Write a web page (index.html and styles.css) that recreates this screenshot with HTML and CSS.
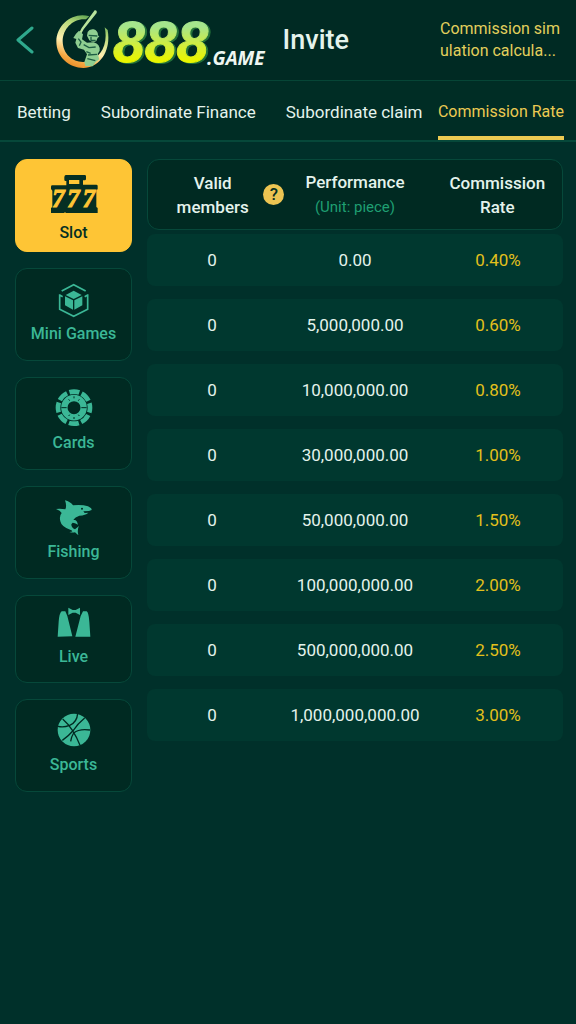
FILE: index.html
```html
<!DOCTYPE html>
<html lang="en">
<head>
  <meta charset="UTF-8">
  <meta name="viewport" content="width=device-width, initial-scale=1.0">
  <title>Invite</title>
  <link rel="stylesheet" href="styles.css">
</head>
<body>
  <header class="header">
    <button class="back" aria-label="Back">
      <svg width="18" height="28" viewBox="0 0 18 28"><path d="M16 2 L2 14 L16 26" /></svg>
    </button>
    <a class="logo" href="#">
      <svg class="emblem" width="56" height="60" viewBox="15 18 168 180" aria-hidden="true">
        <defs>
          <linearGradient id="ring" x1="0.7" y1="0" x2="0.3" y2="1">
            <stop offset="0" stop-color="#4f9a4c" />
            <stop offset="0.25" stop-color="#b5d978" />
            <stop offset="0.6" stop-color="#fff0b0" />
            <stop offset="0.85" stop-color="#f5a742" />
            <stop offset="1" stop-color="#e88a24" />
          </linearGradient>
        </defs>
        <path fill="url(#ring)" d="M118 37 C72 22 20 60 19 112 C19 160 58 192 100 192 C150 190 184 140 173 78 L164 70 C176 122 150 166 108 173 C72 178 39 154 38 112 C38 74 70 42 108 46 Z" />
        <path fill="#b9e39c" d="M134 19 Q142 18 140 27 L101 76 L92 92 L87 88 L95 72 Z" />
        <path fill="#8fce91" d="M113 84 Q118 74 131 76 Q144 80 144 94 L148 98 L143 101 L139 111 Q129 117 118 109 L111 95 Z" />
        <path fill="#8fce91" d="M78 89 L87 80 L99 91 L96 106 L111 116 L131 115 Q151 121 149 140 L143 150 L148 166 L137 174 L128 187 L106 186 L103 174 L111 151 L102 137 L84 132 L76 116 L79 105 L70 102 Z" />
        <path class="emblem-line" d="M116 94 L142 96 M123 98 L123 109 L137 109 M85 104 L93 114 L88 125 M101 122 L117 131 L137 129 M114 153 L141 151 M109 143 L122 148 M112 164 L136 170" />
      </svg>
      <span class="logo-digits">888</span>
      <span class="logo-game">.GAME</span>
    </a>
    <h1 class="title">Invite</h1>
    <a class="calculator" href="#">Commission sim<br>ulation calcula...</a>
  </header>

  <nav class="tabs">
    <a class="tab" href="#">Betting</a>
    <a class="tab" href="#">Subordinate Finance</a>
    <a class="tab" href="#">Subordinate claim</a>
    <a class="tab active" href="#">Commission Rate</a>
  </nav>

  <main class="content">
    <nav class="games">
      <button class="game selected">
        <svg width="48" height="40" viewBox="133 72 144 120" aria-hidden="true">
          <path d="M176 78 h61 q4 0 4 4 v8 q0 4 -4 4 h-5 v13 h40 q4 0 4 4 v9 l-4 5 v49 l4 3 v14 q0 4 -4 4 h-89 l-5 -6 l-5 6 h-33 q-4 0 -4 -4 v-14 l4 -3 v-49 l-4 -5 v-7 q0 -4 4 -4 h42 v-13 h-2 q-4 0 -4 -4 v-8 q0 -4 4 -4 Z" />
          <rect class="slot-light" x="190" y="93" width="31" height="12" />
          <text class="slot-seven" x="140" y="173">7</text>
          <text class="slot-seven" x="185" y="173">7</text>
          <text class="slot-seven" x="231" y="173">7</text>
        </svg>
        <span>Slot</span>
      </button>
      <button class="game">
        <svg width="32" height="40" viewBox="157 58 96 120" aria-hidden="true">
          <path class="hex-line" d="M168 91 L204 72 L240 91 M162 101 V146 L204 167 L246 146 V101 M162 103 L171 108 M246 103 L237 108" />
          <path d="M204 90 L228 103 L204 115 L180 103 Z M178 107 L202 119 V147 L178 134 Z M230 107 L206 119 V147 L230 134 Z" />
        </svg>
        <span>Mini Games</span>
      </button>
      <button class="game">
        <svg width="40" height="40" viewBox="0 4 120 120" aria-hidden="true">
          <circle class="chip-rim" cx="60" cy="60" r="48" pathLength="80" />
          <circle class="chip-ring" cx="60" cy="60" r="29" />
          <path class="chip-marks" d="M22 60 H38 M82 60 H98 M60 26 V32 M60 88 V94 M44 35 L47 39 M76 35 L73 39 M44 85 L47 81 M76 85 L73 81" />
        </svg>
        <span>Cards</span>
      </button>
      <button class="game">
        <svg width="38" height="40" viewBox="147 53 114 120" aria-hidden="true">
          <path d="M177 60 Q193 64 201 75 Q227 72 246 78 Q258 84 257 89 L249 92 L232 93 L236 98 L247 97 Q239 105 220 106 Q207 111 202 118 Q211 118 213 124 L216 133 Q206 127 200 127 L196 132 Q196 143 207 147 L219 137 Q213 147 217 165 L207 156 Q199 158 190 155 Q204 154 196 150 Q166 140 163 123 Q159 107 167 98 Q163 91 150 86 Q163 84 178 87 Q183 77 177 60 Z" />
          <circle class="fish-eye" cx="228" cy="85" r="3" />
        </svg>
        <span>Fishing</span>
      </button>
      <button class="game short">
        <svg width="34" height="34" viewBox="153 52 102 102" aria-hidden="true">
          <path d="M187 54 L200 61 H209 L222 54 V76 L209 69 H200 L187 76 Z M167 65 H178 L184 79 L199 140 L155 141 L158 96 Q160 70 167 65 Z M231 65 H242 Q248 68 250 96 L253 141 H208 L224 79 Z" />
        </svg>
        <span>Live</span>
      </button>
      <button class="game">
        <svg width="34" height="40" viewBox="0 4 102 120" aria-hidden="true">
          <circle cx="51" cy="61" r="49" />
          <path class="ball-line" d="M17 28 Q49 56 69 107 M62 11 Q60 38 38 47 Q20 54 3 50 M83 25 Q61 43 50 61 Q34 80 16 92 M99 61 Q67 56 50 70 Q43 81 41 95" />
        </svg>
        <span>Sports</span>
      </button>
    </nav>

    <table class="rates">
      <thead>
        <tr>
          <th>Valid<br>members <button class="help" aria-label="Help">?</button></th>
          <th>Performance<br><small>(Unit: piece)</small></th>
          <th>Commission<br>Rate</th>
        </tr>
      </thead>
      <tbody>
        <tr><td>0</td><td>0.00</td><td>0.40%</td></tr>
        <tr><td>0</td><td>5,000,000.00</td><td>0.60%</td></tr>
        <tr><td>0</td><td>10,000,000.00</td><td>0.80%</td></tr>
        <tr><td>0</td><td>30,000,000.00</td><td>1.00%</td></tr>
        <tr><td>0</td><td>50,000,000.00</td><td>1.50%</td></tr>
        <tr><td>0</td><td>100,000,000.00</td><td>2.00%</td></tr>
        <tr><td>0</td><td>500,000,000.00</td><td>2.50%</td></tr>
        <tr><td>0</td><td>1,000,000,000.00</td><td>3.00%</td></tr>
      </tbody>
    </table>
  </main>
</body>
</html>
```
FILE: styles.css
```css
* {
  box-sizing: border-box;
}

body {
  margin: 0;
  min-height: 100vh;
  background-color: #00302a;
  color: #e4f3ec;
  font-family: Roboto, "Liberation Sans", sans-serif;
  font-size: 17px;
}

button {
  font: inherit;
  cursor: pointer;
}

a {
  color: inherit;
  text-decoration: none;
}

.header {
  display: flex;
  align-items: center;
  height: 80px;
  padding: 0 16px;
  background-color: #002a23;
}

.back {
  display: flex;
  padding: 0;
  border: 0;
  background: none;
}

.back path {
  fill: none;
  stroke: #2fa98d;
  stroke-width: 3;
  stroke-linecap: round;
  stroke-linejoin: round;
}

.logo {
  display: flex;
  align-items: center;
  margin-left: 21px;
}

.emblem-line {
  fill: none;
  stroke: #1d5d43;
  stroke-width: 4;
}

.logo-digits {
  padding: 4px 4px 0 2px;
  background: linear-gradient(#a5e58c 30%, #d2ee3c 58%, #e9f500 80%);
  -webkit-background-clip: text;
  background-clip: text;
  color: transparent;
  -webkit-text-stroke: 1px transparent;
  filter: drop-shadow(2px 1px 0 #24743a);
  font-family: "Liberation Sans", sans-serif;
  font-size: 57px;
  font-style: italic;
  font-weight: bold;
  line-height: 64px;
}

.logo-game {
  align-self: flex-end;
  margin-left: -5px;
  color: #eef6f1;
  font-family: "Open Sans", sans-serif;
  font-size: 19px;
  font-style: italic;
  font-weight: bold;
  line-height: 32px;
}

.title {
  margin: 0 0 0 18px;
  font-size: 27px;
  font-weight: 500;
  line-height: 32px;
}

.calculator {
  margin-left: auto;
  color: #e2cf5c;
  font-size: 16px;
  line-height: 22px;
  white-space: nowrap;
}

.tabs {
  display: flex;
  height: 62px;
  padding: 0 12px 0 17px;
  border-top: 1px solid #064536;
  border-bottom: 2px solid #06483a;
  background-color: #002d25;
  white-space: nowrap;
}

.tab {
  margin-right: 30px;
  line-height: 62px;
}

.tab.active {
  margin: 0 0 0 auto;
  border-bottom: 4px solid #ecca52;
  color: #ecca52;
  font-size: 16px;
}

.tab:nth-last-child(2) {
  margin-right: 0;
}

.content {
  display: flex;
  align-items: flex-start;
  gap: 15px;
  padding: 17px 13px 16px 15px;
}

.games {
  display: flex;
  flex-direction: column;
  gap: 16px;
  flex: 0 0 117px;
}

.game {
  display: flex;
  flex-direction: column;
  align-items: center;
  gap: 4px;
  height: 93px;
  padding: 11px 0 0;
  border: 1px solid #06483a;
  border-radius: 12px;
  background-color: #002a22;
  color: #3bb796;
  font-size: 16px;
  font-weight: 500;
  line-height: 20px;
}

.game svg {
  fill: currentColor;
}

.game.selected {
  gap: 10px;
  padding-top: 13px;
  border-color: #fec535;
  background-color: #fec535;
  color: #052f23;
}

.game.short {
  gap: 6px;
  height: 88px;
}

.slot-light {
  fill: #fec535;
}

.slot-seven {
  fill: #fec535;
  stroke: #fec535;
  stroke-width: 3;
  font-family: "Liberation Serif", serif;
  font-size: 74px;
  font-style: italic;
  font-weight: bold;
}

.hex-line {
  fill: none;
  stroke: currentColor;
  stroke-width: 5;
}

.chip-rim {
  fill: none;
  stroke: currentColor;
  stroke-width: 14;
  stroke-dasharray: 8 2;
  stroke-dashoffset: 4;
}

.chip-ring {
  fill: none;
  stroke: currentColor;
  stroke-width: 19;
}

.chip-marks,
.ball-line {
  fill: none;
  stroke: #002a22;
  stroke-width: 3;
}

.ball-line {
  stroke-width: 4;
}

.fish-eye {
  fill: #002a22;
}

.rates {
  display: block;
  flex: 1;
  text-align: center;
}

.rates thead {
  display: block;
}

.rates tbody {
  display: flex;
  flex-direction: column;
  gap: 13px;
  margin-top: 4px;
}

.rates tr {
  display: grid;
  grid-template-columns: 5fr 6fr 5fr;
  align-items: center;
}

.rates thead tr {
  height: 71px;
  border: 1px solid #06483a;
  border-radius: 12px;
  background-color: #002a22;
}

.rates tbody tr {
  height: 52px;
  border-radius: 8px;
  background-color: #00382f;
}

.rates th {
  position: relative;
  padding: 0;
  font-weight: 500;
  line-height: 24px;
}

.rates td {
  padding: 0;
}

.rates td:last-child {
  color: #e3c01c;
}

.rates small {
  color: #1f9f72;
  font-size: 15px;
  font-weight: 400;
}

/* sits between the first two columns */
.help {
  position: absolute;
  top: 13px;
  right: -7px;
  width: 21px;
  height: 21px;
  padding: 0;
  border: 0;
  border-radius: 50%;
  background-color: #ecc452;
  color: #052f23;
  font-weight: 500;
  line-height: 21px;
}
```
